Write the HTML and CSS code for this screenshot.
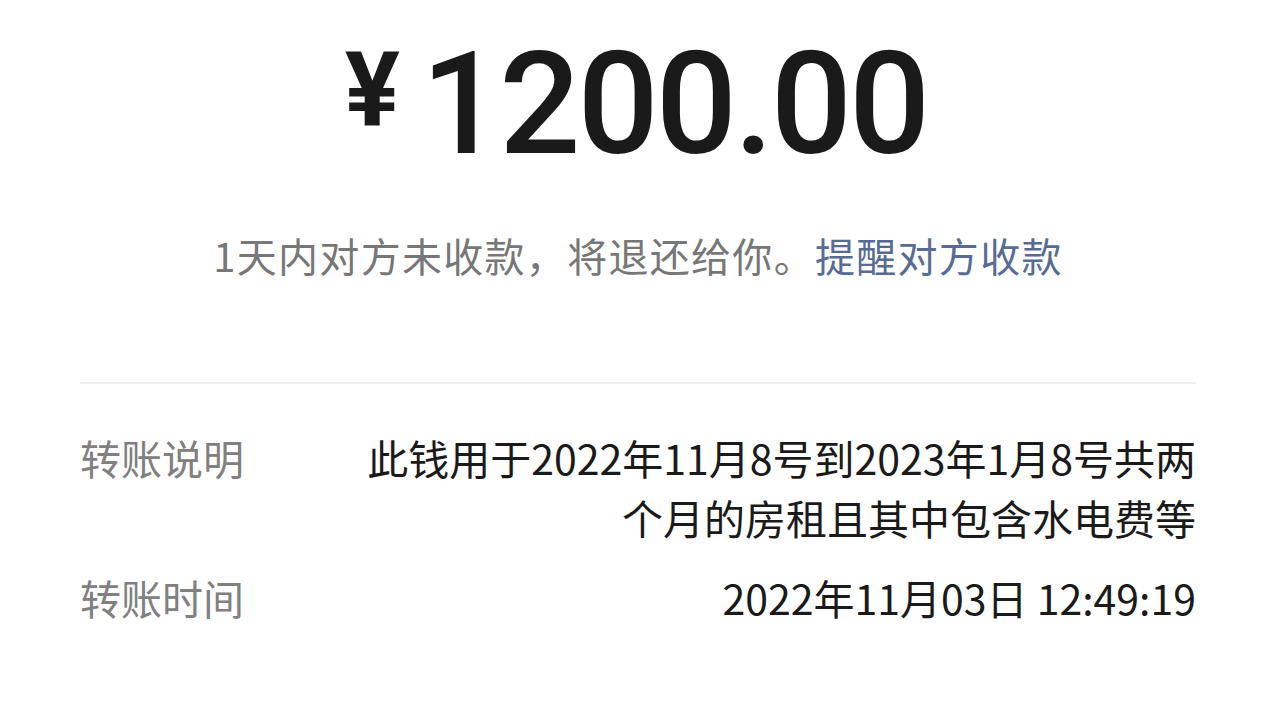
FILE: index.html
```html
<!DOCTYPE html>
<html lang="zh-CN">
<head>
<meta charset="utf-8">
<title>转账</title>
<link rel="stylesheet" href="styles.css">
</head>
<body>
<main class="page">
  <div class="amount"><span class="yen">¥</span><span class="num">1200.00</span></div>
  <p class="notice">1天内对方未收款，将退还给你。<a class="remind" href="#">提醒对方收款</a></p>
  <div class="divider"></div>
  <dl class="details">
    <div class="row">
      <dt class="label">转账说明</dt>
      <dd class="value desc">此钱用于2022年11月8号到2023年1月8号共两个月的房租且其中包含水电费等</dd>
    </div>
    <div class="row">
      <dt class="label">转账时间</dt>
      <dd class="value">2022年11月03日 12:49:19</dd>
    </div>
  </dl>
</main>
</body>
</html>
```

FILE: styles.css
```css
html, body {
  margin: 0;
  padding: 0;
  background: #ffffff;
}

body {
  font-family: "Noto Sans CJK SC", "Noto Sans", sans-serif;
  color: #1a1a1a;
}

.page {
  padding: 0 84px 0 80px;
}

.amount {
  padding-top: 18px;
  text-align: center;
  font-family: Roboto, "Liberation Sans", sans-serif;
  font-weight: 500;
  font-size: 143px;
  line-height: 143px;
  height: 143px;
  color: #1a1a1a;
  margin-right: 4px;
}

.yen {
  font-size: 103px;
  font-weight: 700;
  vertical-align: 28px;
  margin-right: 21px;
}

.num {
  letter-spacing: -3px;
}

.notice {
  margin: 64px 0 0;
  text-align: center;
  font-size: 40px;
  letter-spacing: 1.3px;
  line-height: 60px;
  color: #777777;
}

.remind {
  color: #576b95;
  text-decoration: none;
}

.divider {
  margin-top: 97px;
  height: 2px;
  background: #eeeeee;
}

.details {
  margin: 0;
  padding-top: 43px;
  display: flex;
  flex-direction: column;
  gap: 20px;
}

.row {
  display: flex;
  justify-content: space-between;
  align-items: flex-start;
  font-size: 41px;
  line-height: 60px;
}

.label {
  margin: 0;
  color: #808080;
  flex: none;
}

.value {
  margin: 0;
  text-align: right;
  color: #1a1a1a;
}

.desc {
  width: 850px;
}
```
